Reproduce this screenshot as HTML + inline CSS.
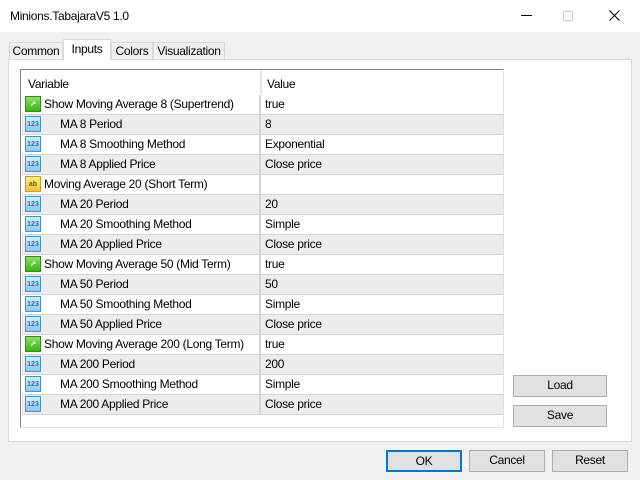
<!DOCTYPE html>
<html><head><style>
*{margin:0;padding:0;box-sizing:border-box}
body{width:640px;height:480px;background:#f0f0f0;font-family:"Liberation Sans",sans-serif;font-size:12px;color:#000;position:relative;overflow:hidden;letter-spacing:-0.3px}
.a{position:absolute}
.title{left:0;top:0;width:640px;height:32px;background:#fff}
.tab{position:absolute;border:1px solid #d9d9d9;border-bottom:none;background:#f0f0f0;text-align:center;line-height:17px}
.panel{left:8px;top:59px;width:624px;height:383px;background:#fff;border:1px solid #d9d9d9}
.tbl{left:20px;top:69px;width:484px;height:359px;background:#fff;border:1px solid #828282;border-right-color:#e0e0e0;border-bottom-color:#e0e0e0}
.row{position:absolute;left:1px;width:481px;height:20px;border-bottom:1px solid #d4d4d4;line-height:19px}
.row.g{background:#ececec}
.row .n{position:absolute;left:0;top:0;width:239px;height:19px;border-right:2px solid #d4d4d4}
.row .v{position:absolute;left:243px;top:0}
.ic{position:absolute;left:3px;top:1px;width:16px;height:16px;font-size:7px;line-height:16px;text-align:center;font-weight:bold;letter-spacing:0}
.i1{background:linear-gradient(#dbeefe,#8cc6f5);border:1px solid #3d95e0;color:#1e6fc0}
.i2{background:linear-gradient(#8ede63,#3db518);border:1px solid #2f8e13;color:#fff}
.i3{background:linear-gradient(#fdeb8e,#f0c23a);border:1px solid #c9a020;color:#7a5a00}
.btn{position:absolute;background:#e1e1e1;border:1px solid #adadad;text-align:center;line-height:19px}
</style></head><body>
<div class="a title"></div>
<div class="a" style="left:10px;top:9px;font-size:12px">Minions.TabajaraV5 1.0</div>
<div class="a" style="left:521px;top:15px;width:11px;height:1px;background:#000"></div>
<div class="a" style="left:563px;top:11px;width:10px;height:10px;border:1px solid #c8c8c8"></div>
<svg class="a" style="left:609px;top:10px" width="11" height="11"><path d="M0.5 0.5L10.5 10.5M10.5 0.5L0.5 10.5" stroke="#000" stroke-width="1.1"/></svg>
<div class="a panel"></div>
<div class="tab" style="left:9px;top:42px;width:54px;height:17px">Common</div>
<div class="tab" style="left:111px;top:42px;width:42px;height:17px">Colors</div>
<div class="tab" style="left:153px;top:42px;width:72px;height:17px">Visualization</div>
<div class="tab" style="left:63px;top:39px;width:48px;height:21px;background:#fff;line-height:19px">Inputs</div>
<div class="a tbl">
<div class="a" style="left:7px;top:7px">Variable</div>
<div class="a" style="left:239px;top:0;width:2px;height:24px;background:#e4e4e4"></div>
<div class="a" style="left:246px;top:7px">Value</div>
<div class="row" style="top:25px"><div class="n"><div class="ic i2">↗</div><span style="position:absolute;left:22px">Show Moving Average 8 (Supertrend)</span></div><div class="v">true</div></div>
<div class="row g" style="top:45px"><div class="n"><div class="ic i1">123</div><span style="position:absolute;left:38px">MA 8 Period</span></div><div class="v">8</div></div>
<div class="row" style="top:65px"><div class="n"><div class="ic i1">123</div><span style="position:absolute;left:38px">MA 8 Smoothing Method</span></div><div class="v">Exponential</div></div>
<div class="row g" style="top:85px"><div class="n"><div class="ic i1">123</div><span style="position:absolute;left:38px">MA 8 Applied Price</span></div><div class="v">Close price</div></div>
<div class="row" style="top:105px"><div class="n"><div class="ic i3">ab</div><span style="position:absolute;left:22px">Moving Average 20 (Short Term)</span></div><div class="v"></div></div>
<div class="row g" style="top:125px"><div class="n"><div class="ic i1">123</div><span style="position:absolute;left:38px">MA 20 Period</span></div><div class="v">20</div></div>
<div class="row" style="top:145px"><div class="n"><div class="ic i1">123</div><span style="position:absolute;left:38px">MA 20 Smoothing Method</span></div><div class="v">Simple</div></div>
<div class="row g" style="top:165px"><div class="n"><div class="ic i1">123</div><span style="position:absolute;left:38px">MA 20 Applied Price</span></div><div class="v">Close price</div></div>
<div class="row" style="top:185px"><div class="n"><div class="ic i2">↗</div><span style="position:absolute;left:22px">Show Moving Average 50 (Mid Term)</span></div><div class="v">true</div></div>
<div class="row g" style="top:205px"><div class="n"><div class="ic i1">123</div><span style="position:absolute;left:38px">MA 50 Period</span></div><div class="v">50</div></div>
<div class="row" style="top:225px"><div class="n"><div class="ic i1">123</div><span style="position:absolute;left:38px">MA 50 Smoothing Method</span></div><div class="v">Simple</div></div>
<div class="row g" style="top:245px"><div class="n"><div class="ic i1">123</div><span style="position:absolute;left:38px">MA 50 Applied Price</span></div><div class="v">Close price</div></div>
<div class="row" style="top:265px"><div class="n"><div class="ic i2">↗</div><span style="position:absolute;left:22px">Show Moving Average 200 (Long Term)</span></div><div class="v">true</div></div>
<div class="row g" style="top:285px"><div class="n"><div class="ic i1">123</div><span style="position:absolute;left:38px">MA 200 Period</span></div><div class="v">200</div></div>
<div class="row" style="top:305px"><div class="n"><div class="ic i1">123</div><span style="position:absolute;left:38px">MA 200 Smoothing Method</span></div><div class="v">Simple</div></div>
<div class="row g" style="top:325px"><div class="n"><div class="ic i1">123</div><span style="position:absolute;left:38px">MA 200 Applied Price</span></div><div class="v">Close price</div></div>
</div>
<div class="btn" style="left:513px;top:375px;width:94px;height:22px">Load</div>
<div class="btn" style="left:513px;top:405px;width:94px;height:22px">Save</div>
<div class="btn" style="left:386px;top:450px;width:76px;height:22px;border:2px solid #0078d7;line-height:18px">OK</div>
<div class="btn" style="left:469px;top:450px;width:76px;height:22px">Cancel</div>
<div class="btn" style="left:552px;top:450px;width:76px;height:22px">Reset</div>
</body></html>
